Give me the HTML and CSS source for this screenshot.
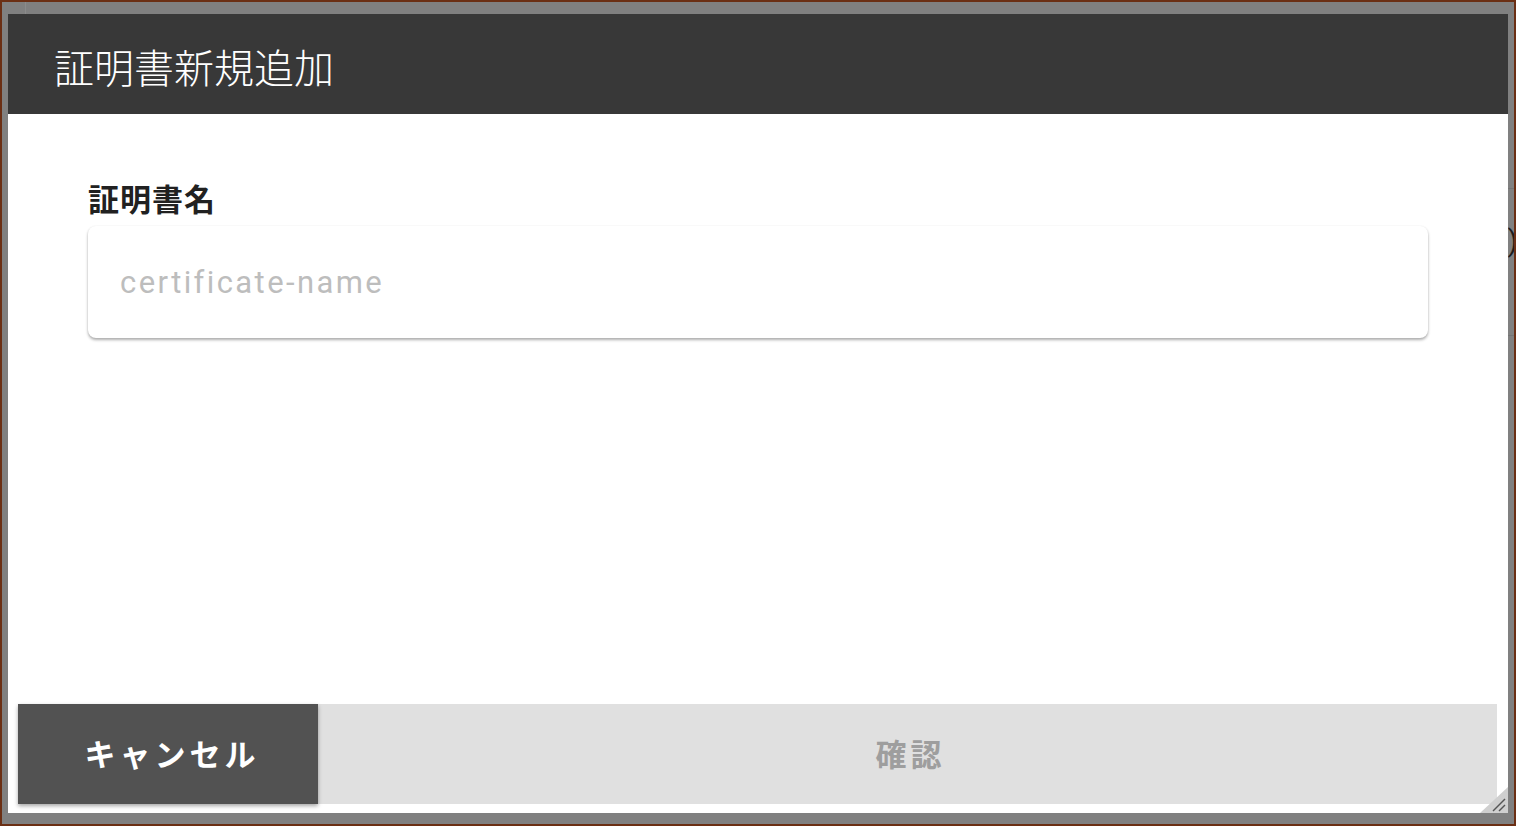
FILE: index.html
```html
<!DOCTYPE html>
<html lang="ja">
<head>
<meta charset="utf-8">
<title>証明書新規追加</title>
<link rel="stylesheet" href="styles.css">
</head>
<body>
<div class="bg-page">
  <div class="bg-side"></div>
  <div class="bg-main">
    <div class="bg-row"><span class="bg-text">)</span></div>
  </div>
</div>
<div class="dialog">
  <div class="dialog-header">
    <h1 class="dialog-title">証明書新規追加</h1>
  </div>
  <div class="dialog-body">
    <label class="field-label" for="cert">証明書名</label>
    <div class="field-card">
      <input id="cert" class="field-input" type="text" placeholder="certificate-name">
    </div>
  </div>
  <div class="dialog-footer">
    <button class="btn btn-cancel">キャンセル</button>
    <button class="btn btn-confirm" disabled>確認</button>
  </div>
  <svg class="resizer" width="28" height="26" viewBox="0 0 28 26">
    <polygon points="28,0 28,26 0,26" fill="#cfcfcf"/>
    <line x1="13" y1="24" x2="25" y2="12" stroke="#555" stroke-width="1.4"/>
    <line x1="19" y1="24" x2="25" y2="18" stroke="#555" stroke-width="1.4"/>
  </svg>
</div>
</body>
</html>
```

FILE: styles.css
```css
* { box-sizing: border-box; }

html, body {
  margin: 0;
  padding: 0;
}

body {
  width: 1516px;
  height: 826px;
  border: 2px solid #6b2f14;
  background: #808080;
  overflow: hidden;
  position: relative;
  font-family: "Noto Sans CJK JP", "Noto Sans", sans-serif;
}

.bg-page {
  display: flex;
  height: 100%;
}

.bg-side {
  width: 24px;
  border-right: 1px solid #8b8b8b;
  height: 12px;
}

.bg-main {
  flex: 1;
  padding-top: 186px;
}

.bg-row {
  height: 148px;
  border-top: 1px solid #747474;
  border-bottom: 1px solid #747474;
  display: flex;
  justify-content: flex-end;
  align-items: center;
  padding-bottom: 44px;
}

.bg-text {
  font-family: "Roboto", sans-serif;
  font-size: 30px;
  color: #1c1c1c;
  margin-right: -4px;
}

.dialog {
  position: absolute;
  left: 6px;
  top: 12px;
  width: 1500px;
  height: 799px;
  background: #ffffff;
  display: flex;
  flex-direction: column;
}

.dialog-header {
  height: 100px;
  background: #383838;
  display: flex;
  align-items: center;
  padding-left: 46px;
  flex-shrink: 0;
}

.dialog-title {
  margin: 4px 0 0 0;
  font-size: 40px;
  font-weight: 300;
  color: #ffffff;
  line-height: 1;
  letter-spacing: 0;
}

.dialog-body {
  padding: 65px 80px 0 80px;
}

.field-label {
  display: block;
  font-size: 31px;
  font-weight: 700;
  color: #212121;
  line-height: 38px;
  letter-spacing: 1px;
}

.field-card {
  margin-top: 9px;
  height: 112px;
  background: #ffffff;
  border-radius: 8px;
  box-shadow: 0 2px 3px rgba(0, 0, 0, 0.32), 0 0 2px rgba(0, 0, 0, 0.06);
  display: flex;
  align-items: center;
  padding: 0 32px;
}

.field-input {
  width: 100%;
  border: none;
  outline: none;
  background: transparent;
  font-family: "Roboto", sans-serif;
  font-size: 31px;
  letter-spacing: 2.4px;
  color: #212121;
  padding: 0;
  margin-top: 0;
}

.field-input::placeholder {
  color: #bdbdbd;
}

.dialog-footer {
  margin-top: auto;
  display: flex;
  padding: 0 11px 9px 10px;
}

.btn {
  height: 100px;
  border: none;
  font-family: "Noto Sans CJK JP", "Noto Sans", sans-serif;
  font-size: 31px;
  font-weight: 700;
  letter-spacing: 4px;
  padding: 0 0 4px 0;
  margin: 0;
}

.btn-cancel {
  width: 300px;
  background: #525252;
  color: #ffffff;
  box-shadow: 0 2px 4px rgba(0, 0, 0, 0.35);
  position: relative;
  z-index: 1;
  padding-left: 8px;
}

.btn-confirm {
  flex: 1;
  background: #e0e0e0;
  color: #9e9e9e;
  padding-left: 6px;
}

.resizer {
  position: absolute;
  right: 0;
  bottom: 0;
}
```
